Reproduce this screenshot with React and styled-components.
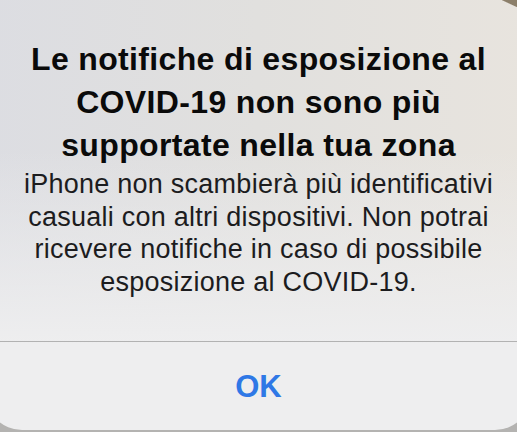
import React from "react";
import styled, { createGlobalStyle } from "styled-components";

const Global = createGlobalStyle`
  html, body {
    margin: 0;
    padding: 0;
    width: 517px;
    height: 432px;
    overflow: hidden;
    background: #b4b3b1;
  }
  #root {
    width: 517px;
    height: 432px;
    overflow: hidden;
  }
`;

const Stage = styled.div`
  width: 517px;
  height: 432px;
  display: flex;
  justify-content: center;
  overflow: hidden;
`;

const Card = styled.div`
  flex: 0 0 545px;
  height: 430px;
  border-radius: 0 0 36px 36px;
  display: flex;
  flex-direction: column;
  overflow: hidden;
  background:
    linear-gradient(205deg, #8c7f6a 0, #8c7f6a 6px, transparent 7px) top 0 right 14px / 26px 26px no-repeat,
    linear-gradient(180deg, rgba(238, 238, 239, 0) 35%, #eeeeef 80%),
    linear-gradient(90deg, #dcdde2 0%, #e1e0de 50%, #e8e4de 100%);
  font-family: "Liberation Sans", Arial, sans-serif;
`;

const Content = styled.div`
  height: 342px;
  box-sizing: border-box;
  padding-top: 38px;
  display: flex;
  flex-direction: column;
  align-items: center;
  text-align: center;
  border-bottom: 1px solid #b2b2b2;
`;

const Title = styled.h1`
  margin: 0;
  font-size: 32px;
  font-weight: 700;
  line-height: 43px;
  letter-spacing: 0.35px;
  color: #0a0a0a;
  white-space: nowrap;
`;

const Message = styled.p`
  margin: 1px 0 0;
  font-size: 27px;
  font-weight: 400;
  line-height: 32.5px;
  letter-spacing: 0.25px;
  color: #1c1c1e;
  white-space: nowrap;
`;

const Button = styled.button`
  flex: 1;
  border: 0;
  background: transparent;
  font-family: inherit;
  font-size: 31px;
  font-weight: 700;
  color: #2f78e6;
  padding: 2px 0 0;
  cursor: pointer;
`;

export default function App() {
  return (
    <>
      <Global />
      <Stage>
        <Card>
          <Content>
            <Title>
              Le notifiche di esposizione al
              <br />
              COVID-19 non sono più
              <br />
              supportate nella tua zona
            </Title>
            <Message>
              iPhone non scambierà più identificativi
              <br />
              casuali con altri dispositivi. Non potrai
              <br />
              ricevere notifiche in caso di possibile
              <br />
              esposizione al COVID-19.
            </Message>
          </Content>
          <Button>OK</Button>
        </Card>
      </Stage>
    </>
  );
}
